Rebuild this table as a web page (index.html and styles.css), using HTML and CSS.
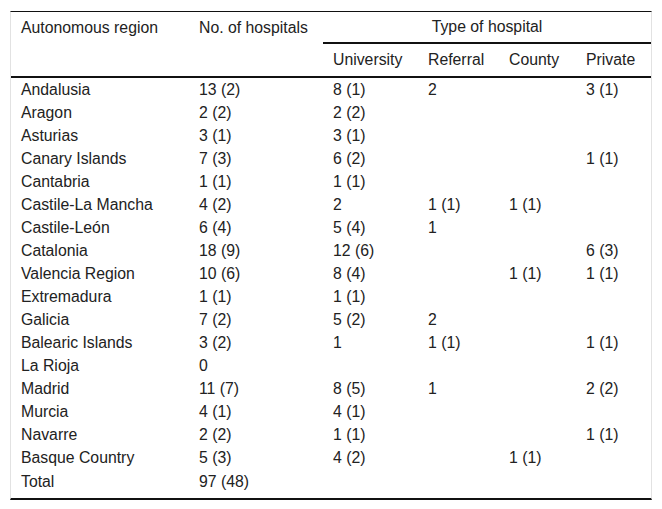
FILE: index.html
```html
<!DOCTYPE html>
<html>
<head>
<meta charset="utf-8">
<link rel="stylesheet" href="styles.css">
</head>
<body>
<div class="wrap">
<table class="data">
<colgroup>
<col class="c1"><col class="c2"><col class="c3"><col class="c4"><col class="c5"><col class="c6">
</colgroup>
<thead>
<tr class="h1">
<th rowspan="2" class="top">Autonomous region</th>
<th rowspan="2" class="top">No. of hospitals</th>
<th colspan="4" class="span">Type of hospital</th>
</tr>
<tr class="h2">
<th>University</th><th>Referral</th><th>County</th><th>Private</th>
</tr>
</thead>
<tbody>
<tr><td>Andalusia</td><td>13 (2)</td><td>8 (1)</td><td>2</td><td></td><td>3 (1)</td></tr>
<tr><td>Aragon</td><td>2 (2)</td><td>2 (2)</td><td></td><td></td><td></td></tr>
<tr><td>Asturias</td><td>3 (1)</td><td>3 (1)</td><td></td><td></td><td></td></tr>
<tr><td>Canary Islands</td><td>7 (3)</td><td>6 (2)</td><td></td><td></td><td>1 (1)</td></tr>
<tr><td>Cantabria</td><td>1 (1)</td><td>1 (1)</td><td></td><td></td><td></td></tr>
<tr><td>Castile-La Mancha</td><td>4 (2)</td><td>2</td><td>1 (1)</td><td>1 (1)</td><td></td></tr>
<tr><td>Castile-León</td><td>6 (4)</td><td>5 (4)</td><td>1</td><td></td><td></td></tr>
<tr><td>Catalonia</td><td>18 (9)</td><td>12 (6)</td><td></td><td></td><td>6 (3)</td></tr>
<tr><td>Valencia Region</td><td>10 (6)</td><td>8 (4)</td><td></td><td>1 (1)</td><td>1 (1)</td></tr>
<tr><td>Extremadura</td><td>1 (1)</td><td>1 (1)</td><td></td><td></td><td></td></tr>
<tr><td>Galicia</td><td>7 (2)</td><td>5 (2)</td><td>2</td><td></td><td></td></tr>
<tr><td>Balearic Islands</td><td>3 (2)</td><td>1</td><td>1 (1)</td><td></td><td>1 (1)</td></tr>
<tr><td>La Rioja</td><td>0</td><td></td><td></td><td></td><td></td></tr>
<tr><td>Madrid</td><td>11 (7)</td><td>8 (5)</td><td>1</td><td></td><td>2 (2)</td></tr>
<tr><td>Murcia</td><td>4 (1)</td><td>4 (1)</td><td></td><td></td><td></td></tr>
<tr><td>Navarre</td><td>2 (2)</td><td>1 (1)</td><td></td><td></td><td>1 (1)</td></tr>
<tr><td>Basque Country</td><td>5 (3)</td><td>4 (2)</td><td></td><td>1 (1)</td><td></td></tr>
<tr class="last"><td>Total</td><td>97 (48)</td><td></td><td></td><td></td><td></td></tr>
</tbody>
</table>
</div>
</body>
</html>
```
FILE: styles.css
```css
html, body {
  margin: 0;
  padding: 0;
  background: #fff;
}
.wrap {
  padding: 11px 10px;
}
.data {
  table-layout: fixed;
  width: 642px;
  border-collapse: separate;
  border-spacing: 0;
  border-left: 1px solid #e2e2e2;
  border-right: 1px solid #e2e2e2;
  border-top: 1px solid #111;
  border-bottom: 2px solid #111;
  font-family: "Liberation Sans", Arial, sans-serif;
  font-size: 15.8px;
  color: #222;
}
.c1 { width: 178px; }
.c2 { width: 134px; }
.c3 { width: 95px; }
.c4 { width: 81px; }
.c5 { width: 77px; }
.c6 { width: 75px; }
th {
  font-weight: normal;
  text-align: left;
  padding: 0 0 0 10px;
  line-height: 18px;
  white-space: nowrap;
}
.h1 th {
  height: 30px;
  vertical-align: middle;
}
.h1 th.top {
  vertical-align: top;
  padding-top: 7px;
  border-bottom: 2px solid #111;
}
.h1 th.span {
  text-align: center;
  padding: 0;
  border-bottom: 2px solid #111;
}
.h2 th {
  height: 32px;
  vertical-align: middle;
  border-bottom: 2px solid #111;
}
td {
  padding: 0 0 0 10px;
  height: 23px;
  line-height: 18px;
  vertical-align: middle;
  white-space: nowrap;
}
.last td {
  padding-bottom: 3px;
  height: 26px;
}
```
